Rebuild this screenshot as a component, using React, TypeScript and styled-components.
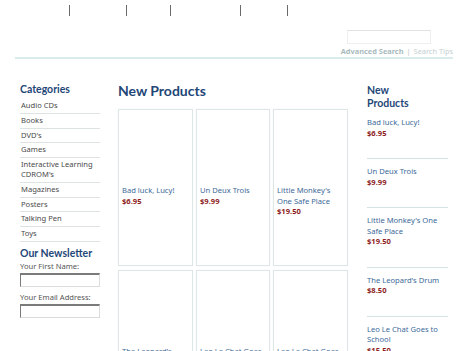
import React from "react";
import styled, { createGlobalStyle } from "styled-components";

const Global = createGlobalStyle`
  html, body { margin: 0; padding: 0; background: #ffffff; }
  body { font-family: "Noto Sans", "DejaVu Sans", sans-serif; font-size: 7.6px; color: #444; }
  * { box-sizing: border-box; }
`;

const Page = styled.div`
  width: 468px;
  height: 351px;
  overflow: hidden;
  padding: 0 15px;
`;

const Header = styled.header`
  display: flex;
  flex-direction: column;
  border-bottom: 2px solid #d9ebea;
`;

const NavRow = styled.nav`
  height: 20px;
  display: flex;
  align-items: center;
`;

const NavLink = styled.a<{ $w: number }>`
  width: ${(p) => p.$w}px;
  text-align: center;
  color: #ffffff;
  text-decoration: none;
  font-size: 8px;
`;

const Sep = styled.span`
  width: 2px;
  height: 11px;
  border-left: 1px solid #6a6a6a;
`;

const SearchRow = styled.div`
  display: flex;
  justify-content: flex-end;
  padding-top: 10px;
  padding-right: 22px;
`;

const SearchInput = styled.input`
  width: 84px;
  height: 14px;
  border: 1px solid #eeeeee;
  border-top-color: #e2e2e2;
  padding: 0;
  margin: 0;
`;

const SearchLinks = styled.div`
  display: flex;
  justify-content: flex-end;
  align-items: center;
  gap: 3px;
  height: 13px;
  color: #b8c6c8;
  font-size: 7.4px;
`;

const AdvLink = styled.a`
  color: #a9bbbe;
  font-weight: 700;
  text-decoration: none;
`;

const TipsLink = styled.a`
  color: #c4d0d2;
  text-decoration: none;
`;

const Body = styled.div`
  display: flex;
  align-items: flex-start;
  padding-top: 23px;
`;

const Sidebar = styled.aside`
  width: 80px;
  margin-left: 5px;
  flex-shrink: 0;
`;

const SideHeading = styled.h3`
  margin: 0 0 3px 0;
  font-family: Lato, "Open Sans", sans-serif;
  font-weight: 700;
  font-size: 10.5px;
  line-height: 14px;
  color: #1f4777;
`;

const CatList = styled.ul`
  list-style: none;
  margin: 0;
  padding: 0;
`;

const CatItem = styled.li`
  padding: 2px 0 2px 1px;
  line-height: 9.8px;
  border-bottom: 1px solid #dde3e3;
  color: #4a4a4a;
`;

const NewsHeading = styled(SideHeading)`
  margin-top: 4px;
  margin-bottom: 1px;
`;

const FieldLabel = styled.label`
  display: block;
  line-height: 10px;
  color: #555;
`;

const FieldInput = styled.input`
  display: block;
  width: 80px;
  height: 14px;
  margin: 2px 0 5px 0;
  padding: 0;
  border: 1px solid #dcdcdc;
  border-top: 2px solid #7a7a7a;
  border-left: 1px solid #7a7a7a;
`;

const Center = styled.main`
  width: 230px;
  margin-left: 18px;
  flex-shrink: 0;
`;

const MainHeading = styled.h2`
  margin: 0 0 9px 0;
  font-family: Lato, "Open Sans", sans-serif;
  font-weight: 700;
  font-size: 14px;
  line-height: 18px;
  color: #1f4777;
`;

const Grid = styled.div`
  display: grid;
  grid-template-columns: 75px 74px 75px;
  column-gap: 3px;
  row-gap: 4px;
`;

const Card = styled.div`
  height: 157px;
  border: 1px solid #dfe6e7;
  box-shadow: 0 0 1px #e8eff0;
  padding: 4px 3px;
`;

const CardImage = styled.div`
  height: 71px;
`;

const Title = styled.a`
  display: block;
  line-height: 10.5px;
  color: #3d6a99;
  text-decoration: none;
`;

const Price = styled.div`
  line-height: 10.5px;
  font-weight: 700;
  color: #8e1e1e;
`;

const Right = styled.aside`
  width: 81px;
  margin-left: 19px;
  flex-shrink: 0;
`;

const RightHeading = styled(SideHeading)`
  line-height: 13px;
  margin: 2px 0 0 0;
`;

const RightItem = styled.div`
  padding: 7px 0 20px 0;
  border-bottom: 1px solid #d5e2e3;
`;

const categories = [
  "Audio CDs",
  "Books",
  "DVD's",
  "Games",
  "Interactive Learning CDROM's",
  "Magazines",
  "Posters",
  "Talking Pen",
  "Toys",
];

const products = [
  { t: "Bad luck, Lucy!", p: "$6.95" },
  { t: "Un Deux Trois", p: "$9.99" },
  { t: "Little Monkey's One Safe Place", p: "$19.50" },
  { t: "The Leopard's Drum", p: "$8.50" },
  { t: "Leo Le Chat Goes to School", p: "$15.50" },
  { t: "Leo Le Chat Goes Shopping", p: "$15.50" },
];

const navItems = [
  { label: "Home", w: 54 },
  { label: "My Account", w: 55 },
  { label: "Cart", w: 42 },
  { label: "Checkout", w: 68 },
  { label: "Log In", w: 45 },
];

export default function App() {
  return (
    <Page>
      <Global />
      <Header>
        <NavRow>
          {navItems.map((n) => (
            <React.Fragment key={n.label}>
              <NavLink $w={n.w}>{n.label}</NavLink>
              <Sep />
            </React.Fragment>
          ))}
        </NavRow>
        <SearchRow>
          <SearchInput />
        </SearchRow>
        <SearchLinks>
          <AdvLink>Advanced Search</AdvLink>
          <span>|</span>
          <TipsLink>Search Tips</TipsLink>
        </SearchLinks>
      </Header>
      <Body>
        <Sidebar>
          <SideHeading>Categories</SideHeading>
          <CatList>
            {categories.map((c) => (
              <CatItem key={c}>{c}</CatItem>
            ))}
          </CatList>
          <NewsHeading>Our Newsletter</NewsHeading>
          <FieldLabel>Your First Name:</FieldLabel>
          <FieldInput />
          <FieldLabel>Your Email Address:</FieldLabel>
          <FieldInput />
        </Sidebar>
        <Center>
          <MainHeading>New Products</MainHeading>
          <Grid>
            {products.map((p) => (
              <Card key={p.t}>
                <CardImage />
                <Title>{p.t}</Title>
                <Price>{p.p}</Price>
              </Card>
            ))}
          </Grid>
        </Center>
        <Right>
          <RightHeading>
            New
            <br />
            Products
          </RightHeading>
          {products.slice(0, 5).map((p) => (
            <RightItem key={p.t}>
              <Title>{p.t}</Title>
              <Price>{p.p}</Price>
            </RightItem>
          ))}
        </Right>
      </Body>
    </Page>
  );
}
